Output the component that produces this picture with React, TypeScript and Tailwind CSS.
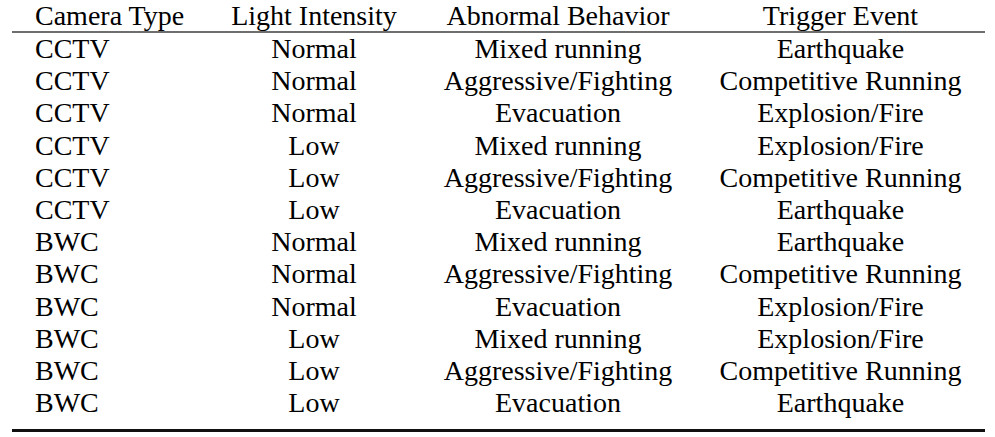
import React from "react";

const rows: [string, string, string, string][] = [
  ["CCTV", "Normal", "Mixed running", "Earthquake"],
  ["CCTV", "Normal", "Aggressive/Fighting", "Competitive Running"],
  ["CCTV", "Normal", "Evacuation", "Explosion/Fire"],
  ["CCTV", "Low", "Mixed running", "Explosion/Fire"],
  ["CCTV", "Low", "Aggressive/Fighting", "Competitive Running"],
  ["CCTV", "Low", "Evacuation", "Earthquake"],
  ["BWC", "Normal", "Mixed running", "Earthquake"],
  ["BWC", "Normal", "Aggressive/Fighting", "Competitive Running"],
  ["BWC", "Normal", "Evacuation", "Explosion/Fire"],
  ["BWC", "Low", "Mixed running", "Explosion/Fire"],
  ["BWC", "Low", "Aggressive/Fighting", "Competitive Running"],
  ["BWC", "Low", "Evacuation", "Earthquake"],
];

function Row({ cells }: { cells: [string, string, string, string] }) {
  return (
    <>
      <div className="pl-[23px] whitespace-nowrap">{cells[0]}</div>
      <div className="text-center whitespace-nowrap">{cells[1]}</div>
      <div className="text-center whitespace-nowrap">{cells[2]}</div>
      <div className="text-center whitespace-nowrap">{cells[3]}</div>
    </>
  );
}

export default function App() {
  return (
    <div className="w-[995px] h-[437px] bg-white overflow-hidden pl-[12px] pt-[1px] text-black font-['Liberation_Serif','Times_New_Roman',serif] text-[28px] leading-[32.2px]">
      <div className="grid grid-cols-[196px_212px_276px_289px] w-[973px]">
        <div className="pl-[23px] whitespace-nowrap leading-[30px]">Camera Type</div>
        <div className="text-center whitespace-nowrap leading-[30px]">Light Intensity</div>
        <div className="text-center whitespace-nowrap leading-[30px]">Abnormal Behavior</div>
        <div className="text-center whitespace-nowrap leading-[30px]">Trigger Event</div>
        <div className="col-span-4 h-[2px] bg-[#6e6e6e]" />
        {rows.map((r, i) => (
          <Row key={i} cells={r} />
        ))}
        <div className="col-span-4 h-[3px] mt-[10px] bg-[#111]" />
      </div>
    </div>
  );
}
